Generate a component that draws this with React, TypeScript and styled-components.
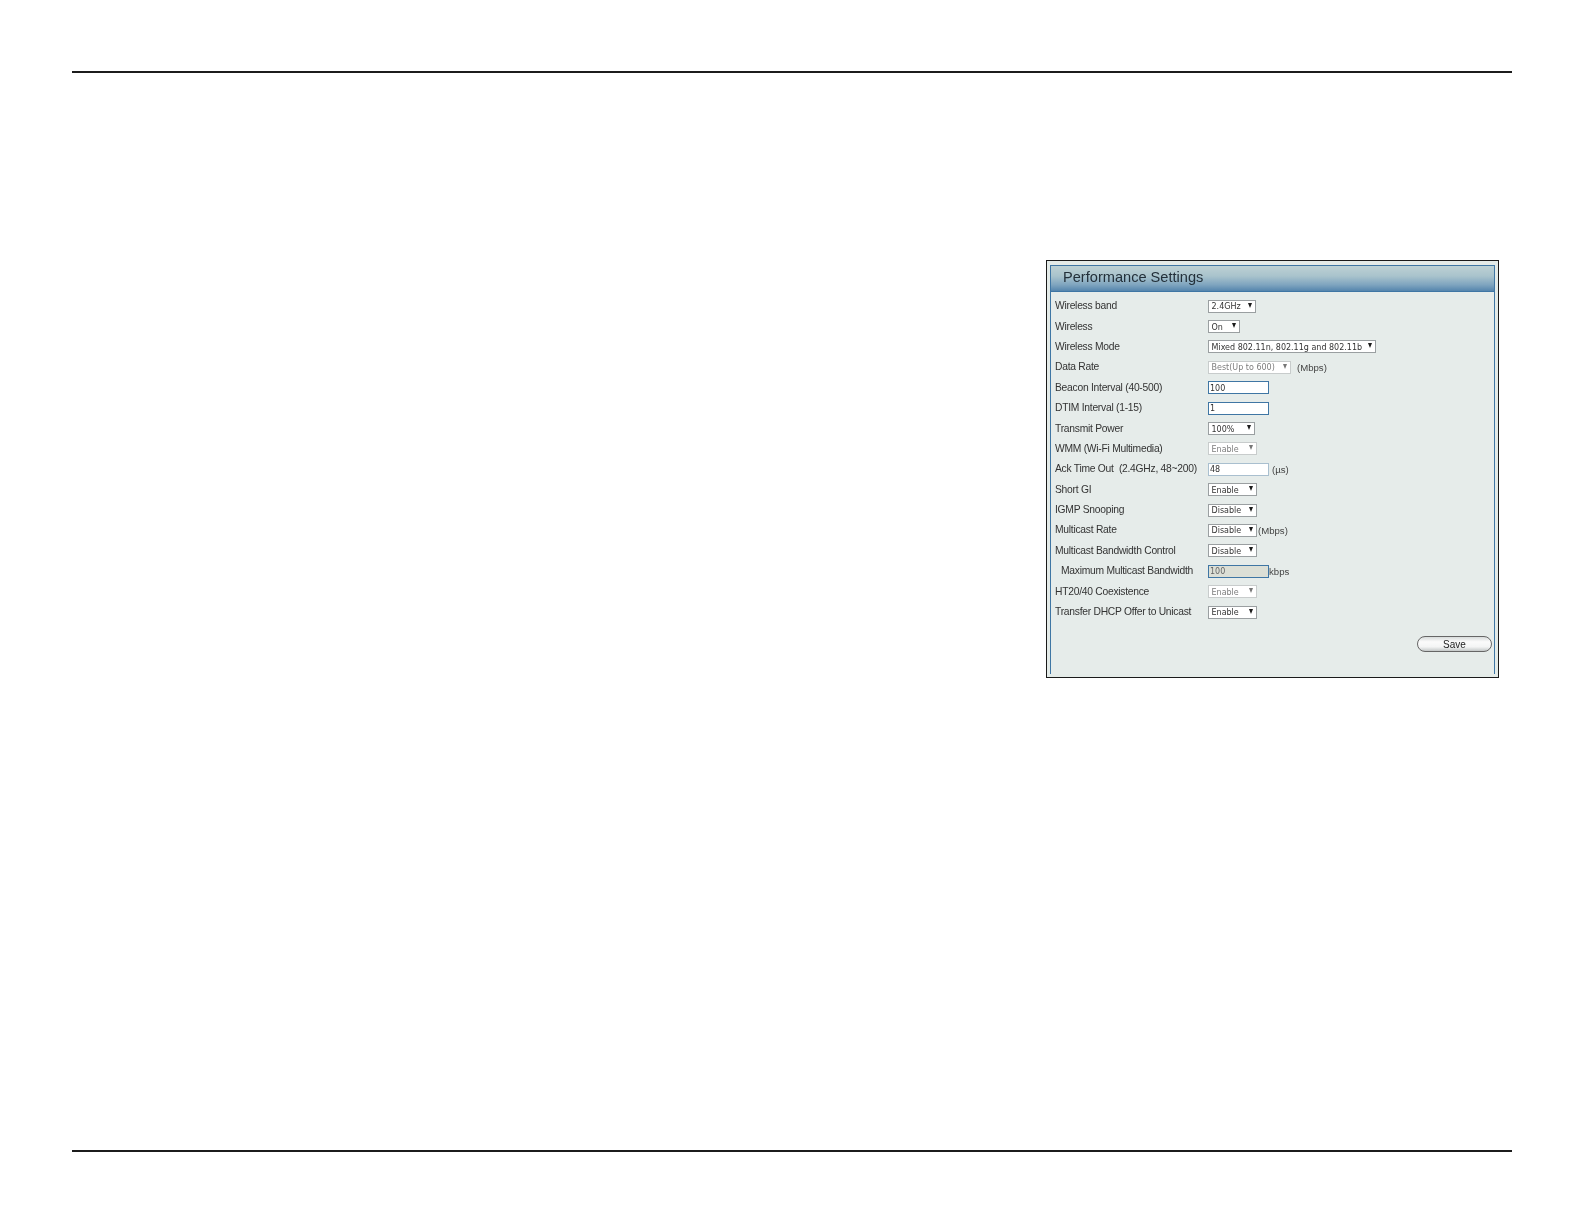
import React from "react";
import styled, { createGlobalStyle } from "styled-components";

const Global = createGlobalStyle`
  html, body { margin: 0; padding: 0; background: #fff; }
  body { font-family: "Liberation Sans", Arial, sans-serif; }
`;

const Page = styled.div`
  width: 1584px;
  height: 1224px;
  box-sizing: border-box;
  padding: 71px 72px 0;
  display: flex;
  flex-direction: column;
`;

const Rule = styled.div`
  height: 2px;
  background: #1c1c1c;
  flex: none;
`;

const Body = styled.div`
  flex: none;
  height: 1077px;
  display: flex;
  justify-content: flex-end;
  align-items: flex-start;
  padding: 187px 13px 0 0;
  box-sizing: border-box;
`;

const Frame = styled.div`
  width: 453px;
  height: 418px;
  box-sizing: border-box;
  border: 1px solid #1a1a1a;
  padding: 4px 3px 3px 3px;
  background: #e4ebe8;
  display: flex;
`;

const Panel = styled.section`
  flex: 1;
  box-sizing: border-box;
  border: 1px solid #3f76a4;
  border-bottom: none;
  background: #e6ecea;
  display: flex;
  flex-direction: column;
  filter: blur(0.35px);
`;

const Header = styled.h2`
  margin: 0;
  height: 26px;
  box-sizing: border-box;
  flex: none;
  padding: 0 0 3px 12px;
  display: flex;
  align-items: center;
  font: 400 14.6px "Liberation Sans", Arial, sans-serif;
  color: #23303a;
  background: linear-gradient(#bdd1d4 0%, #a9c3cc 40%, #7fa5bf 75%, #5585ad 100%);
  border-bottom: 1px solid #3f76a4;
`;

const Rows = styled.div`
  padding: 4px 0 0 4px;
  display: grid;
  grid-auto-rows: 20.4px;
  flex: none;
`;

const Row = styled.div`
  display: grid;
  grid-template-columns: 153px 1fr;
  align-items: center;
`;

const Label = styled.span<{ $indent?: boolean }>`
  font-size: 10.3px;
  letter-spacing: -0.26px;
  color: #333;
  white-space: pre;
  padding-left: ${(p) => (p.$indent ? "6px" : "0")};
  margin-top: -1px;
`;

const Control = styled.div`
  display: flex;
  align-items: center;
`;

const Select = styled.div<{ $w: number; $disabled?: boolean }>`
  width: ${(p) => p.$w}px;
  height: 13px;
  box-sizing: border-box;
  background: #fff;
  border: 1px solid ${(p) => (p.$disabled ? "#c8cccc" : "#9a9fa1")};
  padding: 1px 3.5px 0 2.5px;
  display: flex;
  align-items: center;
  justify-content: space-between;
  font: 8px "DejaVu Sans", Verdana, sans-serif;
  color: ${(p) => (p.$disabled ? "#7d7d7d" : "#333")};
  white-space: pre;
`;

const Arrow = styled.i<{ $disabled?: boolean }>`
  width: 0;
  height: 0;
  margin-top: -3px;
  border-left: 2.5px solid transparent;
  border-right: 2.5px solid transparent;
  border-top: 5px solid ${(p) => (p.$disabled ? "#777" : "#1b1b1b")};
  flex: none;
`;

const Input = styled.div<{ $tone?: "blue" | "grey"; $disabled?: boolean }>`
  width: 61px;
  height: 13px;
  box-sizing: border-box;
  border: 1px solid ${(p) => (p.$tone === "grey" ? "#a9bfcf" : "#3f76a4")};
  background: ${(p) => (p.$disabled ? "#dcdfd6" : "#fff")};
  padding: 1px 1px 0;
  display: flex;
  align-items: center;
  font: 8px "DejaVu Sans", Verdana, sans-serif;
  color: ${(p) => (p.$disabled ? "#666" : "#333")};
`;

const Unit = styled.span<{ $gap: number }>`
  margin-left: ${(p) => p.$gap}px;
  font-size: 9.6px;
  color: #444;
`;

const Footer = styled.div`
  display: flex;
  justify-content: flex-end;
  padding: 14px 2px 0 0;
`;

const SaveButton = styled.button`
  width: 75px;
  height: 16px;
  box-sizing: border-box;
  border: 1px solid #666;
  border-radius: 8px;
  padding: 0;
  background: linear-gradient(#d8dcdb 0%, #fbfbfb 35%, #f4f5f5 70%, #c4c8c8 100%);
  font: 10px "Liberation Sans", Arial, sans-serif;
  color: #222;
`;

type Item = {
  label: string;
  indent?: boolean;
  select?: string;
  w?: number;
  input?: string;
  disabled?: boolean;
  tone?: "blue" | "grey";
  unit?: string;
  gap?: number;
};

const items: Item[] = [
  { label: "Wireless band", select: "2.4GHz", w: 48 },
  { label: "Wireless", select: "On", w: 32 },
  { label: "Wireless Mode", select: "Mixed 802.11n, 802.11g and 802.11b", w: 168 },
  { label: "Data Rate", select: "Best(Up to 600)", w: 83, disabled: true, unit: "(Mbps)", gap: 6 },
  { label: "Beacon Interval (40-500)", input: "100" },
  { label: "DTIM Interval (1-15)", input: "1" },
  { label: "Transmit Power", select: "100%", w: 47 },
  { label: "WMM (Wi-Fi Multimedia)", select: "Enable", w: 49, disabled: true },
  { label: "Ack Time Out  (2.4GHz, 48~200)", input: "48", tone: "grey", unit: "(µs)", gap: 3 },
  { label: "Short GI", select: "Enable", w: 49 },
  { label: "IGMP Snooping", select: "Disable", w: 49 },
  { label: "Multicast Rate", select: "Disable", w: 49, unit: "(Mbps)", gap: 1 },
  { label: "Multicast Bandwidth Control", select: "Disable", w: 49 },
  { label: "Maximum Multicast Bandwidth", indent: true, input: "100", disabled: true, unit: "kbps", gap: 0 },
  { label: "HT20/40 Coexistence", select: "Enable", w: 49, disabled: true },
  { label: "Transfer DHCP Offer to Unicast", select: "Enable", w: 49 },
];

export default function App() {
  return (
    <Page>
      <Global />
      <Rule />
      <Body>
        <Frame>
          <Panel>
            <Header>Performance Settings</Header>
            <Rows>
              {items.map((it) => (
                <Row key={it.label}>
                  <Label $indent={it.indent}>{it.label}</Label>
                  <Control>
                    {it.select !== undefined ? (
                      <Select $w={it.w ?? 49} $disabled={it.disabled}>
                        {it.select}
                        <Arrow $disabled={it.disabled} />
                      </Select>
                    ) : (
                      <Input $tone={it.tone} $disabled={it.disabled}>
                        {it.input}
                      </Input>
                    )}
                    {it.unit && <Unit $gap={it.gap ?? 0}>{it.unit}</Unit>}
                  </Control>
                </Row>
              ))}
            </Rows>
            <Footer>
              <SaveButton>Save</SaveButton>
            </Footer>
          </Panel>
        </Frame>
      </Body>
      <Rule />
    </Page>
  );
}
